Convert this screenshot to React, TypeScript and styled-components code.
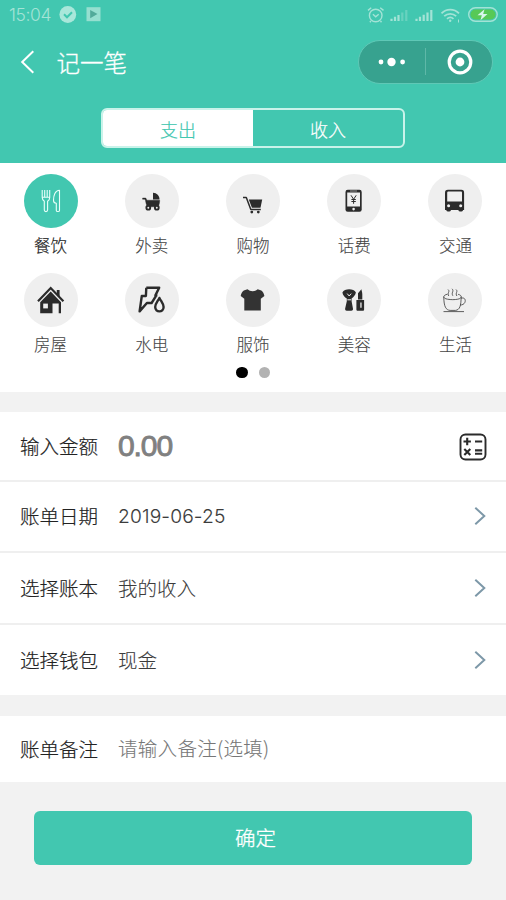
import React, { useState } from "react";
import styled, { createGlobalStyle } from "styled-components";

const TEAL = "#42c7b0";
const INK = "#2b2b2b";

const GlobalStyle = createGlobalStyle`
  * { box-sizing: border-box; }
  body { margin: 0; background: #f2f2f2; font-family: "Noto Sans CJK SC", sans-serif; }
  button { font: inherit; border: 0; padding: 0; background: none; color: inherit; }
  svg { display: block; flex: none; }
`;

const Page = styled.div`
  width: 506px;
  height: 900px;
  background: #f2f2f2;
  overflow: hidden;
`;

const Header = styled.header`
  height: 163px;
  background: ${TEAL};
`;

const StatusBar = styled.div`
  height: 29px;
  padding: 0 8px 0 9px;
  display: flex;
  align-items: center;
  justify-content: space-between;
  color: #a3e3d6;
`;

const StatusGroup = styled.div`
  display: flex;
  align-items: center;
`;

const Clock = styled.span`
  width: 50px;
  font: 300 17.5px/28px Inter, sans-serif;
  letter-spacing: -0.4px;
`;

const TitleBar = styled.div`
  height: 65px;
  padding: 0 13px 0 20px;
  display: flex;
  align-items: center;
`;

const Title = styled.h1`
  margin: 0 auto 0 20.5px;
  font-size: 23.5px;
  line-height: 36px;
  font-weight: 300;
  -webkit-text-stroke: 0.3px #fff;
  color: #fff;
`;

const Capsule = styled.div`
  width: 135px;
  height: 44px;
  border: 1px solid #5fc8b6;
  border-radius: 22px;
  background: #37a28f;
  display: grid;
  grid-template-columns: 1fr 1px 1fr;
  align-items: center;
  justify-items: center;
`;

const CapsuleLine = styled.i`
  width: 1px;
  height: 27px;
  background: #5fb8a8;
`;

const Tabs = styled.div`
  width: 304px;
  height: 40px;
  margin: 14px auto 0;
  border: 2px solid #c9f3ea;
  border-radius: 6px;
  overflow: hidden;
  display: grid;
  grid-template-columns: 1fr 1fr;
`;

const Tab = styled.button<{ $on: boolean }>`
  font-size: 18px;
  line-height: 36px;
  padding-top: 1px;
  font-weight: 300;
  -webkit-text-stroke: 0.2px currentColor;
  color: ${(p) => (p.$on ? TEAL : "#fff")};
  background: ${(p) => (p.$on ? "#fff" : "transparent")};
`;

const Categories = styled.section`
  height: 229px;
  padding-top: 11px;
  background: #fff;
`;

const CategoryGrid = styled.div`
  display: grid;
  grid-template-columns: repeat(5, 1fr);
  grid-template-rows: 98.5px 94px;
`;

const Category = styled.button<{ $on: boolean }>`
  display: flex;
  flex-direction: column;
  align-items: center;
  font-size: 16.5px;
  line-height: 24px;
  font-weight: 300;
  -webkit-text-stroke: ${(p) => (p.$on ? "0.2px" : "0.1px")} currentColor;
  color: ${(p) => (p.$on ? "#222" : "#444")};
`;

const Disc = styled.span<{ $on: boolean }>`
  width: 54px;
  height: 54px;
  margin-bottom: 5px;
  border-radius: 50%;
  background: ${(p) => (p.$on ? TEAL : "#efefef")};
`;

const Dots = styled.div`
  display: flex;
  justify-content: center;
  gap: 11px;
`;

const Dot = styled.i<{ $on?: boolean }>`
  width: 11.5px;
  height: 11.5px;
  border-radius: 50%;
  background: ${(p) => (p.$on ? "#000" : "#b2b2b2")};
`;

const Form = styled.section`
  margin-top: 20px;
`;

const Row = styled.div<{ $h: number; $line?: boolean }>`
  height: ${(p) => p.$h}px;
  padding: 0 19px 0 20px;
  display: flex;
  align-items: center;
  background: #fff;
  border-bottom: ${(p) => (p.$line ? "2px solid #efefef" : "0")};
`;

const Label = styled.span`
  width: 98px;
  font-size: 19.5px;
  line-height: 30px;
  font-weight: 300;
  -webkit-text-stroke: 0.2px currentColor;
  color: #222;
`;

const Value = styled.span<{ $hint?: boolean }>`
  margin-right: auto;
  font-size: 19.5px;
  line-height: 30px;
  font-weight: 300;
  letter-spacing: ${(p) => (p.$hint ? "0.3px" : "0")};
  margin-top: ${(p) => (p.$hint ? "-2px" : "0")};
  -webkit-text-stroke: 0.1px currentColor;
  color: ${(p) => (p.$hint ? "#777" : "#3c3c3c")};
`;

const DateValue = styled(Value)`
  font-family: Inter, sans-serif;
  font-size: 19.2px;
  letter-spacing: 0.15px;
`;

const Amount = styled.span`
  margin-right: auto;
  font: 400 30px/36px "Liberation Sans", sans-serif;
  letter-spacing: -1.1px;
  color: #808080;
  -webkit-text-stroke: 0.9px #808080;
`;

const Note = styled.section`
  margin-top: 21px;
`;

const Submit = styled.button`
  display: block;
  width: 438px;
  height: 54px;
  margin: 29px 0 0 34px;
  border-radius: 6px;
  background: ${TEAL};
  color: #fff;
  font-size: 20.5px;
  line-height: 52px;
  padding: 0 0 2px 5px;
  font-weight: 300;
  -webkit-text-stroke: 0.3px #fff;
`;

const DiscSvg = ({ children }: { children: React.ReactNode }) => (
  <svg width="54" height="54" viewBox="0 0 54 54" fill="none" strokeLinejoin="round">{children}</svg>
);

const icons: Record<string, React.ReactNode> = {
  dining: (
    <g stroke="#e9fffa" strokeWidth="1.1">
      <path d="M18.2 16v7.5c0 2 1.1 3 2.1 3.8v8.8c0 2 3.3 2 3.3 0v-8.8c1.2-.8 2.1-1.8 2.1-3.8V16M20.7 16v7M23.2 16v7M18.2 23.2h7.5" />
      <path d="M35.5 16.2v20.2c0 1.4-3.2 1.4-3.2 0v-7.2c-2 0-2.8-.8-2.8-3 0-4.5 1.6-10 6-10z" />
    </g>
  ),
  takeout: (
    <g fill={INK}>
      <path d="M28 18.7c3.8.2 6.5 3 6.5 6.7H28z" />
      <path d="M17.6 24h3.200l1.100 2.200h12.800c0 2.700-.6 4.400-1.500 6.600H22.300c-1-2-1.500-4.200-1.900-6.600l-.6-.9h-2.200z" stroke={INK} strokeWidth=".4" />
      <g fill="#efefef" stroke={INK} strokeWidth="1.9"><circle cx="23.300" cy="33.700" r="1.900" /><circle cx="31.800" cy="33.700" r="1.900" /></g>
    </g>
  ),
  shopping: (
    <g>
      <path d="M17 23.6h3.300l4.500 12h10" stroke={INK} strokeWidth="1.5" />
      <path d="M22.800 25.500h13.400l-1.700 8.300h-8.600z" fill={INK} />
      <circle cx="25.800" cy="38.100" r="1.400" fill={INK} /><circle cx="32.300" cy="38.100" r="1.400" fill={INK} />
    </g>
  ),
  phone: (
    <g>
      <rect x="18.500" y="15.700" width="16.200" height="22" rx="2.200" fill={INK} />
      <path d="M20.200 18.500h12.800v14H20.200z" fill="#efefef" />
      <path d="M23 17h7" stroke="#aaa" strokeWidth=".8" />
      <circle cx="26.600" cy="35.100" r="1.300" fill="#efefef" />
      <path d="M24 21.300l2.600 4 2.600-4M26.600 25.300v4.500M24.400 25.500h4.400M24.400 27.500h4.400" stroke={INK} strokeWidth="1" />
    </g>
  ),
  bus: (
    <g>
      <path d="M20 15.700h13.300c2.200 0 2.800 1.200 2.800 3.200v17h-1.200v.6c0 1.400-4.400 1.400-4.400 0v-.6h-7.700v.6c0 1.400-4.400 1.400-4.400 0v-.6h-1.400v-17c0-2 .8-3.200 3-3.200z" fill={INK} />
      <path d="M20.700 17.500h12c1 0 1.300.4 1.300 1.200v8.800H19.200v-8.800c0-.8.5-1.200 1.500-1.200z" fill="#efefef" />
      <circle cx="20.600" cy="31.700" r="1.500" fill="#efefef" /><circle cx="32.700" cy="31.700" r="1.500" fill="#efefef" />
    </g>
  ),
  house: (
    <g>
      <path d="M14 28.300L26.700 15l12.700 13.300" stroke={INK} strokeWidth="2.200" strokeLinejoin="miter" />
      <path d="M32.800 17h2.800v7l-2.800-2.800z" fill={INK} />
      <path d="M26.700 18.500L37 29.200v11.100h-2.300v-9.800h-6.200v9.800H16.200V29.200z" fill={INK} />
      <path d="M19.200 30.600h4.700v4.800h-4.700z" fill="#efefef" />
    </g>
  ),
  utilities: (
    <g stroke={INK} strokeWidth="2.4">
      <path d="M21.300 14.800h12.900l-3.800 7.600h2M21.300 14.800l-.4 8.200h-4.100l-2.200 15.400 7.300-8.400h4.700l3.500-5.600 1-2" />
      <path d="M34.400 24.900c1.800 3.700 4.200 5.900 4.200 9.100 0 5.800-8.400 5.800-8.400 0 0-3.200 2.400-5.400 4.200-9.100z" />
    </g>
  ),
  clothes: (
    <path d="M21.500 16.300c2.800 2.600 7.300 2.600 10.200 0l3.600 1.100c1.700 1 2.600 3.200 3.100 5.600l-3.600 2.800v11.600H18.300V25.800L14.700 23c.5-2.400 1.400-4.600 3.100-5.600z" fill="#333" />
  ),
  beauty: (
    <g fill={INK}>
      <path d="M15.400 19.500c2-4.200 11.500-4.200 13.500 0-.5 2.700-2.600 4.900-4.300 6v2.800l1.400 7.500c.1 1.400-.7 1.900-1.600 1.900h-4.700c-1 0-1.700-.6-1.600-1.900l1.700-7.500v-2.800c-2.200-1.200-3.900-3.300-4.400-6z" />
      <path d="M20.200 20.600l2 2.400 2-2.400M20.300 26.800h3.700" stroke="#efefef" strokeWidth="1" />
      <path d="M31 26.400v-6.100l3.400-4.100c.4 2.200.9 3.100.9 5.100v5.100zM29.400 27h7.700v9.400c0 .8-.5 1.300-1.300 1.300h-5.100c-.8 0-1.300-.5-1.300-1.300z" />
      <path d="M33.300 29.500h1.300v5.300h-1.300z" fill="#efefef" />
    </g>
  ),
  life: (
    <g stroke="#444" strokeWidth=".85">
      <path d="M15.800 23.700c0 10 2.200 13.400 6.300 13.700h5.500c4.100-.7 5.500-4.200 5.500-13.700" />
      <path d="M19.500 21.200c-5 1-5 4.200 0 5 3.500.6 7 .6 10.300 0 4.600-.9 4.600-3.900.3-4.900" />
      <path d="M33 25.300c5.800-2.200 5.800 7-.9 6.700M15.500 38.600h20.500M20 16.500c2.500 2-1.300 3.500.8 6.500M24 15.800c2.500 2.300-1.200 4 .9 7M28 16.500c2.500 2-1.200 3.500.9 6.500" />
    </g>
  ),
};

const categories = [
  ["dining", "餐饮"], ["takeout", "外卖"], ["shopping", "购物"], ["phone", "话费"], ["bus", "交通"],
  ["house", "房屋"], ["utilities", "水电"], ["clothes", "服饰"], ["beauty", "美容"], ["life", "生活"],
];

const StatusLeftIcons = () => (
  <svg width="44" height="20" viewBox="0 0 44 20">
    <circle cx="8.800" cy="9.500" r="8.400" fill="#a9e7da" />
    <path d="M5 9.300l3 3 5-5" fill="none" stroke={TEAL} strokeWidth="2" />
    <path d="M27.500 2.200h14v14h-14z" fill="#96dfd0" />
    <path d="M31.200 5v8.200l7.300-4.100z" fill="#52aa9a" />
  </svg>
);

const StatusRightIcons = () => (
  <svg width="132" height="20" viewBox="0 0 132 20" fill="none" stroke="#a3e3d6" strokeWidth="1.4">
    <circle cx="9.700" cy="10.500" r="6.300" />
    <path d="M2 5.400L5.200 2.700M14.200 2.700l3.300 2.700M6.900 9.200l2.800 2.600 3-2.600M4.900 16l-1 1.300M14.500 16l1 1.300" />
    <path d="M25.500 16v-2.300M29 16v-4.300M32.500 16v-6" strokeWidth="2.200" />
    <path d="M36.300 16V7.500M40.300 16V5" strokeWidth="2.200" opacity=".4" />
    <path d="M50.500 16v-2.300M54 16v-4.300M57.700 16V9.700M61.500 16V7.500M65.300 16V5" strokeWidth="2.200" />
    <path d="M75.500 8.300c5-5 12.500-5 17.500 0M78.200 11.200c3.400-3.200 8.600-3.200 12 0M81 13.800c1.900-1.700 4.600-1.700 6.500 0" strokeWidth="1.800" />
    <circle cx="84.200" cy="15.700" r="1.200" fill="#a3e3d6" stroke="none" />
    <path d="M92.500 17.500v-3" strokeWidth="1" />
    <rect x="102.700" y="2.700" width="28.500" height="13.600" rx="6.800" />
    <rect x="104.500" y="4.500" width="25" height="10" rx="5" fill="#57c956" stroke="none" />
    <path d="M118.500 4.300l-7 6h4.300l-1.300 5 7-6.300h-4.300z" fill="#d8f7ec" stroke="none" />
  </svg>
);

const BackIcon = () => (
  <svg width="16" height="26" viewBox="0 0 16 26" fill="none" stroke="#fff" strokeWidth="2">
    <path d="M13.300 2.300L2.200 13l11.100 10.700" />
  </svg>
);

const MoreIcon = () => (
  <svg width="28" height="10" viewBox="0 0 28 10" fill="#fff">
    <circle cx="3" cy="5" r="2.400" /><circle cx="13.500" cy="5" r="4.200" /><circle cx="24.600" cy="5" r="2.400" />
  </svg>
);

const TargetIcon = () => (
  <svg width="28" height="26" viewBox="0 0 28 26">
    <circle cx="15" cy="13" r="10.800" fill="none" stroke="#fff" strokeWidth="3.200" />
    <circle cx="15" cy="13" r="4.400" fill="#fff" />
  </svg>
);

const CalculatorIcon = () => (
  <svg width="28" height="30" viewBox="0 0 28 30" fill="none" stroke={INK} strokeWidth="1.900">
    <rect x="1.500" y="3.500" width="25" height="25" rx="5" />
    <path d="M4.500 10.500h7.400M8.200 6.800v7.400M16 10.500h7.200M5.300 18l6 6M11.300 18l-6 6M16 19.400h7.200M16 22.800h7.200" strokeWidth="2.100" />
  </svg>
);

const ArrowIcon = () => (
  <svg width="14" height="20" viewBox="0 0 14 20" fill="none" stroke="#7d98a8" strokeWidth="2">
    <path d="M2.300 1.800l9 8.200-9 8.200" />
  </svg>
);

export default function App() {
  const [tab, setTab] = useState(0);
  const [selected, setSelected] = useState("dining");
  return (
    <>
      <GlobalStyle />
      <Page>
        <Header>
          <StatusBar>
            <StatusGroup><Clock>15:04</Clock><StatusLeftIcons /></StatusGroup>
            <StatusRightIcons />
          </StatusBar>
          <TitleBar>
            <BackIcon />
            <Title>记一笔</Title>
            <Capsule><MoreIcon /><CapsuleLine /><TargetIcon /></Capsule>
          </TitleBar>
          <Tabs>
            {["支出", "收入"].map((t, i) => (
              <Tab key={t} $on={tab === i} onClick={() => setTab(i)}>{t}</Tab>
            ))}
          </Tabs>
        </Header>
        <Categories>
          <CategoryGrid>
            {categories.map(([id, name]) => (
              <Category key={id} $on={selected === id} onClick={() => setSelected(id)}>
                <Disc $on={selected === id}><DiscSvg>{icons[id]}</DiscSvg></Disc>
                {name}
              </Category>
            ))}
          </CategoryGrid>
          <Dots><Dot $on /><Dot /></Dots>
        </Categories>
        <Form>
          <Row $h={69.5} $line><Label>输入金额</Label><Amount>0.00</Amount><CalculatorIcon /></Row>
          <Row $h={71.5} $line><Label>账单日期</Label><DateValue>2019-06-25</DateValue><ArrowIcon /></Row>
          <Row $h={72} $line><Label>选择账本</Label><Value>我的收入</Value><ArrowIcon /></Row>
          <Row $h={70}><Label>选择钱包</Label><Value>现金</Value><ArrowIcon /></Row>
        </Form>
        <Note>
          <Row $h={66}><Label>账单备注</Label><Value $hint>请输入备注(选填)</Value></Row>
        </Note>
        <Submit>确定</Submit>
      </Page>
    </>
  );
}
